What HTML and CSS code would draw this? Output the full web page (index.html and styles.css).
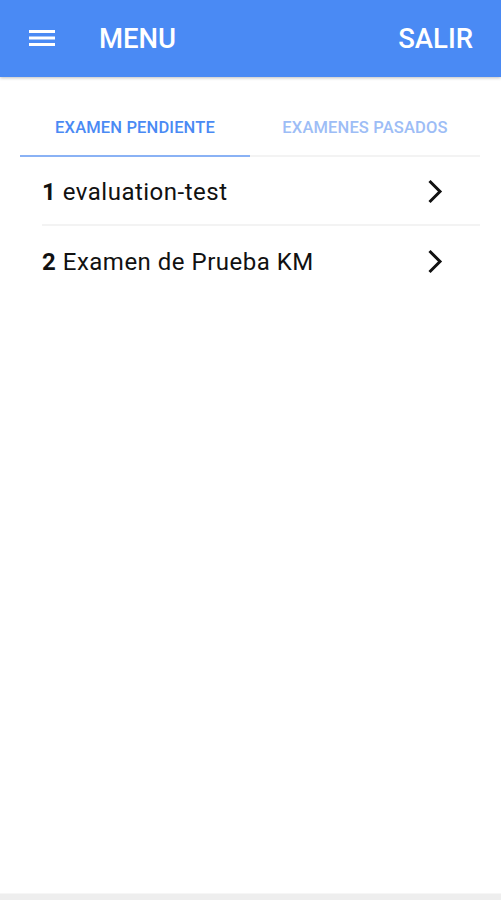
FILE: index.html
```html
<!DOCTYPE html>
<html lang="es">
<head>
  <meta charset="UTF-8" />
  <meta name="viewport" content="width=device-width, initial-scale=1.0"/>
  <title>Examenes</title>
  <link rel="stylesheet" href="styles.css">
</head>
<body>
  <header class="barra">
    <div class="barra-izq">
      <svg class="hamburguesa" width="26" height="18" viewBox="0 0 26 18">
        <rect x="0" y="1" width="26" height="3" fill="#fff"/>
        <rect x="0" y="7.5" width="26" height="3" fill="#fff"/>
        <rect x="0" y="14" width="26" height="3" fill="#fff"/>
      </svg>
      <span class="titulo">MENU</span>
    </div>
    <span class="salir">SALIR</span>
  </header>

  <main class="contenido">
    <nav class="tabs">
      <a class="tab activa">EXAMEN PENDIENTE</a>
      <a class="tab">EXAMENES PASADOS</a>
    </nav>

    <ul class="lista">
      <li class="item">
        <span><b>1</b> evaluation-test</span>
        <svg class="chevron" width="16" height="25" viewBox="0 0 16 25"><path d="M2.5 2 L13 12.5 L2.5 23" fill="none" stroke="#111" stroke-width="3"/></svg>
      </li>
      <li class="item">
        <span><b>2</b> Examen de Prueba KM</span>
        <svg class="chevron" width="16" height="25" viewBox="0 0 16 25"><path d="M2.5 2 L13 12.5 L2.5 23" fill="none" stroke="#111" stroke-width="3"/></svg>
      </li>
    </ul>
  </main>

  <footer class="pie"></footer>
</body>
</html>
```

FILE: styles.css
```css
body { font-family: Roboto, "Liberation Sans", Arial, sans-serif; margin: 0; background: #fff; height: 900px; display: flex; flex-direction: column; }
.barra {
  background-color: #4a8af4;
  height: 77px;
  display: flex;
  align-items: center;
  justify-content: space-between;
  padding: 0 28px 0 29px;
  box-shadow: 0 1px 3px rgba(0,0,0,0.25);
  color: #fff;
}
.barra-izq { display: flex; align-items: center; gap: 44px; }
.hamburguesa { display: block; margin-top: -2px; }
.titulo, .salir { font-size: 27.5px; font-weight: 500; }
.contenido { flex: 1; padding: 0 21px 0 20px; }
.tabs { display: flex; margin-top: 34px; border-bottom: 2px solid #f3f3f3; }
.tab {
  flex: 1;
  text-align: center;
  font-size: 16.5px;
  font-weight: 500;
  letter-spacing: 0.15px;
  color: #9dbdf6;
  padding: 7px 0 18px;
  margin-bottom: -2px;
  border-bottom: 2px solid transparent;
}
.tab.activa { color: #4a8af4; border-bottom-color: #8ab2f5; }
.lista { list-style: none; margin: 0; padding: 0 0 0 22px; }
.item {
  display: flex;
  justify-content: space-between;
  align-items: center;
  height: 67px;
  padding-top: 2px;
  box-sizing: border-box;
  height: 69px;
  font-size: 24px;
  letter-spacing: 0.5px;
  color: #111;
  padding-right: 37px;
  border-bottom: 2px solid #f3f3f3;
}
.item:last-child { border-bottom: none; }
.item b { font-weight: 700; }
.pie { height: 6px; background: #eeeeee; border-top: 1px solid #f6f6f6; }
```
